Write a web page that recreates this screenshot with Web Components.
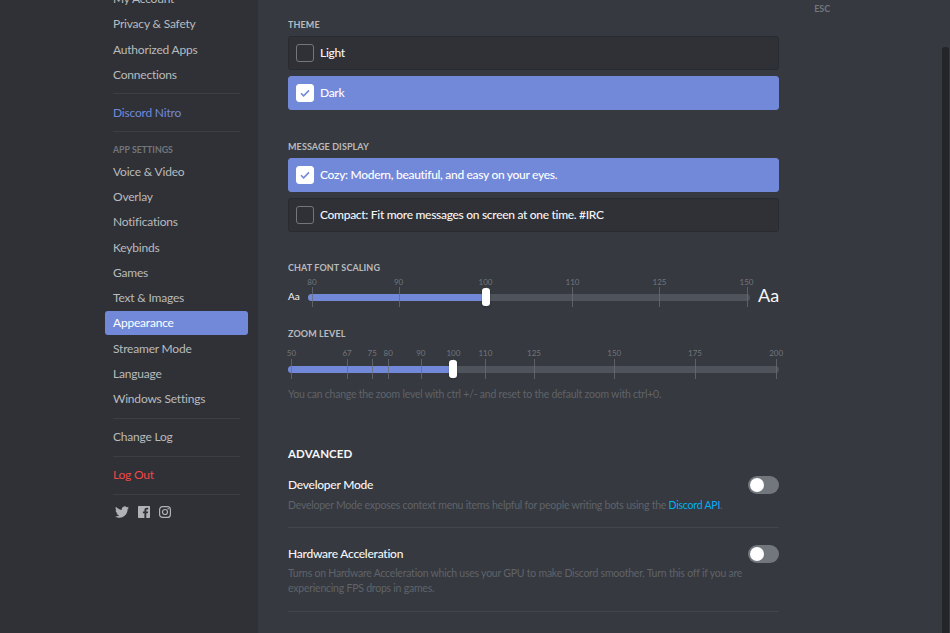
<!DOCTYPE html>
<html>
<head>
<meta charset="utf-8">
<title>Appearance</title>
<style>
    html, body {
        margin: 0;
        height: 633px;
        overflow: hidden;
        background: #36393f;
        font-family: "Lato", "Noto Sans", sans-serif;
    }
</style>
</head>
<body>
<settings-page>
    <settings-sidebar slot="sidebar">
        <side-item>My Account</side-item>
        <side-item>Privacy &amp; Safety</side-item>
        <side-item>Authorized Apps</side-item>
        <side-item>Connections</side-item>
        <side-sep></side-sep>
        <side-item kind="nitro">Discord Nitro</side-item>
        <side-sep></side-sep>
        <side-head>App Settings</side-head>
        <side-item>Voice &amp; Video</side-item>
        <side-item>Overlay</side-item>
        <side-item>Notifications</side-item>
        <side-item>Keybinds</side-item>
        <side-item>Games</side-item>
        <side-item>Text &amp; Images</side-item>
        <side-item selected>Appearance</side-item>
        <side-item>Streamer Mode</side-item>
        <side-item>Language</side-item>
        <side-item>Windows Settings</side-item>
        <side-sep></side-sep>
        <side-item>Change Log</side-item>
        <side-sep></side-sep>
        <side-item kind="danger">Log Out</side-item>
        <side-sep></side-sep>
        <social-links></social-links>
    </settings-sidebar>

    <form-label style="margin-top:19px">Theme</form-label>
    <radio-row style="margin-top:5px">Light</radio-row>
    <radio-row style="margin-top:6px" checked>Dark</radio-row>

    <form-label style="margin-top:31px">Message Display</form-label>
    <radio-row style="margin-top:5px" checked>Cozy: Modern, beautiful, and easy on your eyes.</radio-row>
    <radio-row style="margin-top:6px">Compact: Fit more messages on screen at one time. #IRC</radio-row>

    <form-label style="margin-top:30px">Chat Font Scaling</form-label>
    <font-slider style="margin-top:6px"></font-slider>

    <form-label style="margin-top:18px">Zoom Level</form-label>
    <zoom-slider style="margin-top:7.5px"></zoom-slider>
    <form-note>You can change the zoom level with ctrl +/- and reset to the default zoom with ctrl+0.</form-note>

    <form-title>Advanced</form-title>
    <toggle-row>
        <span slot="title">Developer Mode</span>
        Developer Mode exposes context menu items helpful for people writing bots using the <a style="color:#00b0f4;text-decoration:none" href="#">Discord API</a>.
    </toggle-row>
    <toggle-row>
        <span slot="title">Hardware Acceleration</span>
        Turns on Hardware Acceleration which uses your GPU to make Discord smoother. Turn this off if you are<br>experiencing FPS drops in games.
    </toggle-row>
</settings-page>

<script>
class SettingsPage extends HTMLElement {
    constructor() {
        super();
        this.attachShadow({ mode: "open" });
        this.shadowRoot.innerHTML = `
        <style>
            :host {
                display: flex;
                height: 633px;
                overflow: hidden;
                background: #36393f;
            }
            .side { flex: 0 0 258px; }
            .content {
                flex: 0 0 490px;
                margin-left: 30px;
            }
            .esc {
                margin: 3px 0 0 35px;
                font-size: 9px;
                line-height: 11px;
                font-weight: 700;
                color: #72767d;
            }
            .track {
                width: 7px;
                margin: 47px 1px 0 auto;
                background: #232528;
                border-radius: 3px 3px 0 0;
            }
        </style>
        <div class="side"><slot name="sidebar"></slot></div>
        <div class="content"><slot></slot></div>
        <div class="esc">ESC</div>
        <div class="track"></div>`;
    }
}

class SettingsSidebar extends HTMLElement {
    constructor() {
        super();
        this.attachShadow({ mode: "open" });
        this.shadowRoot.innerHTML = `
        <style>
            :host {
                display: block;
                height: 633px;
                overflow: hidden;
                background: #2f3136;
            }
            .list {
                margin-top: -13px;
                padding: 0 10px 0 105px;
            }
        </style>
        <div class="list"><slot></slot></div>`;
    }
}

class SideItem extends HTMLElement {
    constructor() {
        super();
        this.attachShadow({ mode: "open" });
        this.shadowRoot.innerHTML = `
        <style>
            :host {
                display: block;
                height: 24px;
                margin-bottom: 1.28px;
                padding-left: 8px;
                border-radius: 3px;
                font-size: 12px;
                line-height: 23px;
                letter-spacing: -.2px;
                color: #b9bbbe;
            }
            :host([selected]) {
                background: #7289da;
                color: #fff;
            }
            :host([kind="nitro"]) { color: #7289da; }
            :host([kind="danger"]) { color: #f04747; }
        </style>
        <slot></slot>`;
    }
}

class SideSep extends HTMLElement {
    constructor() {
        super();
        this.attachShadow({ mode: "open" });
        this.shadowRoot.innerHTML = `
        <style>
            :host {
                display: block;
                height: 1px;
                margin: 6.5px 8px 6.5px 8px;
                background: #3c3e44;
            }
        </style>`;
    }
}

class SideHead extends HTMLElement {
    constructor() {
        super();
        this.attachShadow({ mode: "open" });
        this.shadowRoot.innerHTML = `
        <style>
            :host {
                display: block;
                padding: 4px 0 3px 8px;
                font-size: 8.8px;
                line-height: 14px;
                font-weight: 700;
                text-transform: uppercase;
                color: #72767d;
            }
        </style>
        <slot></slot>`;
    }
}

class SocialLinks extends HTMLElement {
    constructor() {
        super();
        this.attachShadow({ mode: "open" });
        this.shadowRoot.innerHTML = `
        <style>
            :host {
                display: flex;
                align-items: center;
                gap: 9px;
                padding: 4px 0 0 10px;
                color: #b0b2b5;
            }
            svg { display: block; width: 12px; height: 12px; fill: currentColor; }
            svg.bird { width: 14px; height: 14px; }
        </style>
        <svg class="bird" viewBox="0 0 24 24"><path d="M23.95 4.57a10 10 0 0 1-2.82.78 4.96 4.96 0 0 0 2.16-2.73c-.95.56-2 .96-3.13 1.19a4.92 4.92 0 0 0-8.38 4.48C7.69 8.1 4.07 6.13 1.64 3.16a4.82 4.82 0 0 0-.67 2.48c0 1.71.87 3.21 2.19 4.1a4.9 4.9 0 0 1-2.23-.62v.06a4.92 4.92 0 0 0 3.95 4.83 5 5 0 0 1-2.21.08 4.94 4.94 0 0 0 4.6 3.42 9.87 9.87 0 0 1-6.1 2.1c-.39 0-.78-.02-1.17-.06a14 14 0 0 0 7.56 2.21c9.05 0 14-7.5 14-13.99 0-.21 0-.42-.02-.63A9.94 9.94 0 0 0 24 4.59z"/></svg>
        <svg viewBox="0 0 24 24"><path d="M22.7 0H1.3C.6 0 0 .6 0 1.3v21.4C0 23.4.6 24 1.3 24h11.5v-9.3H9.7v-3.6h3.1V8.4c0-3.1 1.9-4.8 4.7-4.8 1.3 0 2.5.1 2.8.1v3.2h-1.9c-1.5 0-1.8.7-1.8 1.8v2.4h3.6l-.5 3.6h-3.1V24h6.1c.7 0 1.3-.6 1.3-1.3V1.3C24 .6 23.4 0 22.7 0z"/></svg>
        <svg viewBox="0 0 24 24" style="fill:none;stroke:currentColor;stroke-width:2.4"><rect x="1.2" y="1.2" width="21.6" height="21.6" rx="6"/><circle cx="12" cy="12" r="5"/><circle cx="18.3" cy="5.7" r="1.5" style="fill:currentColor;stroke:none"/></svg>`;
    }
}

class FormLabel extends HTMLElement {
    constructor() {
        super();
        this.attachShadow({ mode: "open" });
        this.shadowRoot.innerHTML = `
        <style>
            :host {
                display: block;
                font-size: 9px;
                line-height: 12px;
                font-weight: 700;
                letter-spacing: .1px;
                text-transform: uppercase;
                color: #b9bbbe;
            }
        </style>
        <slot></slot>`;
    }
}

class RadioRow extends HTMLElement {
    constructor() {
        super();
        this.attachShadow({ mode: "open" });
        this.shadowRoot.innerHTML = `
        <style>
            :host {
                display: flex;
                align-items: center;
                gap: 6px;
                box-sizing: border-box;
                height: 34px;
                padding-left: 7px;
                border: 1px solid #282b30;
                border-radius: 3px;
                background: #2f3136;
                font-size: 12px;
                letter-spacing: -.3px;
                font-weight: 500;
                color: #f6f6f7;
            }
            :host([checked]) {
                background: #7289da;
                border-color: #7289da;
                color: #fff;
            }
            .box {
                box-sizing: border-box;
                width: 18px;
                height: 18px;
                border: 1px solid #72767d;
                border-radius: 3px;
            }
            .box svg { display: none; }
            :host([checked]) .box {
                background: #fff;
                border-color: #fff;
            }
            :host([checked]) .box svg {
                display: block;
                width: 16px;
                height: 16px;
            }
            .label { padding-bottom: 1px; }
        </style>
        <div class="box"><svg viewBox="0 0 16 16"><path d="M4 8.3l2.6 2.6L12 5.4" fill="none" stroke="#7289da" stroke-width="1.5"/></svg></div>
        <div class="label"><slot></slot></div>`;
    }
}

// shared markup for the two sliders, marks are [label, px from track start]
function sliderMarkup(width, fill, marks) {
    const ticks = marks.map(([label, x]) => {
        const left = (x / width * 100).toFixed(2);
        return `<i class="tick" style="left:${left}%"></i><b class="mark" style="left:${left}%">${label}</b>`;
    }).join("");
    const pct = (fill / width * 100).toFixed(2);
    return `
        <div class="track">
            <div class="fill" style="width:${pct}%"></div>
            ${ticks}
            <div class="grab" style="left:${pct}%"></div>
        </div>`;
}

const sliderStyle = `
    .track {
        position: relative;
        height: 7px;
        border-radius: 3.5px;
        background: #4f545c;
    }
    .fill {
        height: 100%;
        border-radius: 3.5px 0 0 3.5px;
        background: #7289da;
    }
    .tick {
        position: absolute;
        top: -7px;
        width: 1px;
        height: 20px;
        background: #6a6e75;
        opacity: .75;
    }
    .mark {
        position: absolute;
        top: -17.5px;
        transform: translateX(-50%);
        font-size: 8px;
        line-height: 10px;
        font-weight: 400;
        color: #72767d;
    }
    .grab {
        position: absolute;
        top: -6px;
        width: 8px;
        height: 18px;
        margin-left: -4px;
        border-radius: 3px;
        background: #fff;
        box-shadow: 0 1px 2px rgba(0,0,0,.3);
    }`;

class FontSlider extends HTMLElement {
    constructor() {
        super();
        this.attachShadow({ mode: "open" });
        const marks = [["80", 4], ["90", 90.5], ["100", 177.5], ["110", 264.5], ["125", 351.5], ["150", 438.5]];
        this.shadowRoot.innerHTML = `
        <style>
            :host {
                display: flex;
                align-items: center;
                height: 30px;
                color: #f6f6f7;
            }
            .small { flex: 0 0 20px; font-size: 10px; padding-top: 1px; }
            .slide { flex: 0 0 442px; padding-top: 5px; }
            .big { margin-left: 8px; font-size: 18px; line-height: 20px; }
            ${sliderStyle}
        </style>
        <span class="small">Aa</span>
        <div class="slide">${sliderMarkup(442, 177.5, marks)}</div>
        <span class="big">Aa</span>`;
    }
}

class ZoomSlider extends HTMLElement {
    constructor() {
        super();
        this.attachShadow({ mode: "open" });
        const marks = [["50", 3.5], ["67", 59], ["75", 84], ["80", 100], ["90", 132.5], ["100", 165], ["110", 197], ["125", 245.5], ["150", 325.5], ["175", 406], ["200", 487]];
        this.shadowRoot.innerHTML = `
        <style>
            :host {
                display: block;
                height: 30px;
                padding-top: 18px;
                box-sizing: border-box;
            }
            ${sliderStyle}
        </style>
        ${sliderMarkup(490, 165, marks)}`;
    }
}

class FormNote extends HTMLElement {
    constructor() {
        super();
        this.attachShadow({ mode: "open" });
        this.shadowRoot.innerHTML = `
        <style>
            :host {
                display: block;
                margin-top: 9.5px;
                font-size: 10.5px;
                line-height: 14px;
                letter-spacing: -.23px;
                color: #5f636a;
            }
        </style>
        <slot></slot>`;
    }
}

class FormTitle extends HTMLElement {
    constructor() {
        super();
        this.attachShadow({ mode: "open" });
        this.shadowRoot.innerHTML = `
        <style>
            :host {
                display: block;
                margin-top: 45.5px;
                font-size: 11.5px;
                line-height: 13px;
                font-weight: 700;
                letter-spacing: .1px;
                text-transform: uppercase;
                color: #f6f6f7;
            }
        </style>
        <slot></slot>`;
    }
}

class ToggleRow extends HTMLElement {
    constructor() {
        super();
        this.attachShadow({ mode: "open" });
        this.shadowRoot.innerHTML = `
        <style>
            :host {
                display: block;
                padding: 16.5px 0 14.5px;
                border-bottom: 1px solid #42454b;
            }
            .top {
                display: flex;
                justify-content: space-between;
                align-items: center;
                height: 18px;
                font-size: 12px;
                letter-spacing: -.25px;
                font-weight: 500;
                color: #f6f6f7;
            }
            .name { padding-bottom: 1px; }
            .switch {
                box-sizing: border-box;
                width: 31px;
                height: 18px;
                padding: 2px;
                border-radius: 9px;
                background: #72767d;
            }
            .knob {
                width: 14px;
                height: 14px;
                border-radius: 50%;
                background: #fff;
            }
            .desc {
                margin-top: 3.5px;
                font-size: 10.5px;
                line-height: 15px;
                letter-spacing: -.23px;
                color: #5f636a;
            }
        </style>
        <div class="top"><div class="name"><slot name="title"></slot></div><div class="switch"><div class="knob"></div></div></div>
        <div class="desc"><slot></slot></div>`;
    }
}

window.customElements.define('settings-page', SettingsPage);
window.customElements.define('settings-sidebar', SettingsSidebar);
window.customElements.define('side-item', SideItem);
window.customElements.define('side-sep', SideSep);
window.customElements.define('side-head', SideHead);
window.customElements.define('social-links', SocialLinks);
window.customElements.define('form-label', FormLabel);
window.customElements.define('radio-row', RadioRow);
window.customElements.define('font-slider', FontSlider);
window.customElements.define('zoom-slider', ZoomSlider);
window.customElements.define('form-note', FormNote);
window.customElements.define('form-title', FormTitle);
window.customElements.define('toggle-row', ToggleRow);
</script>
</body>
</html>
